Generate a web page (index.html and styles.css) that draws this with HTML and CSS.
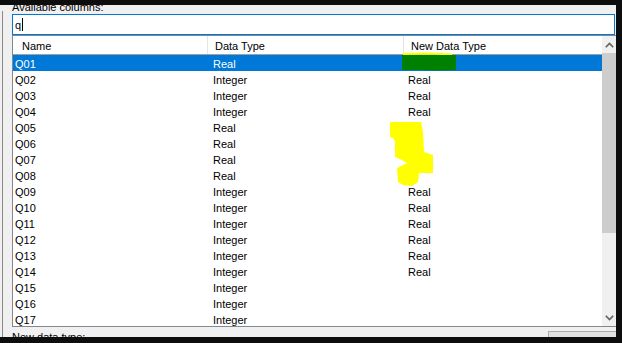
FILE: index.html
```html
<!DOCTYPE html>
<html>
<head>
<meta charset="utf-8">
<link rel="stylesheet" href="styles.css">
</head>
<body>
<div class="window">
  <div class="label-top"><span>Available columns:</span></div>
  <div class="textbox"><span class="typed">q</span><span class="caret"></span></div>
  <div class="listview">
    <div class="table">
      <div class="header">
        <div class="hcell c1">Name</div>
        <div class="hcell c2">Data Type</div>
        <div class="hcell c3">New Data Type</div>
      </div>
      <div class="rows">
        <div class="row selected"><div class="cell c1">Q01</div><div class="cell c2">Real</div><div class="cell c3"></div></div>
        <div class="row"><div class="cell c1">Q02</div><div class="cell c2">Integer</div><div class="cell c3">Real</div></div>
        <div class="row"><div class="cell c1">Q03</div><div class="cell c2">Integer</div><div class="cell c3">Real</div></div>
        <div class="row"><div class="cell c1">Q04</div><div class="cell c2">Integer</div><div class="cell c3">Real</div></div>
        <div class="row"><div class="cell c1">Q05</div><div class="cell c2">Real</div><div class="cell c3"></div></div>
        <div class="row"><div class="cell c1">Q06</div><div class="cell c2">Real</div><div class="cell c3"></div></div>
        <div class="row"><div class="cell c1">Q07</div><div class="cell c2">Real</div><div class="cell c3"></div></div>
        <div class="row"><div class="cell c1">Q08</div><div class="cell c2">Real</div><div class="cell c3"></div></div>
        <div class="row"><div class="cell c1">Q09</div><div class="cell c2">Integer</div><div class="cell c3">Real</div></div>
        <div class="row"><div class="cell c1">Q10</div><div class="cell c2">Integer</div><div class="cell c3">Real</div></div>
        <div class="row"><div class="cell c1">Q11</div><div class="cell c2">Integer</div><div class="cell c3">Real</div></div>
        <div class="row"><div class="cell c1">Q12</div><div class="cell c2">Integer</div><div class="cell c3">Real</div></div>
        <div class="row"><div class="cell c1">Q13</div><div class="cell c2">Integer</div><div class="cell c3">Real</div></div>
        <div class="row"><div class="cell c1">Q14</div><div class="cell c2">Integer</div><div class="cell c3">Real</div></div>
        <div class="row"><div class="cell c1">Q15</div><div class="cell c2">Integer</div><div class="cell c3"></div></div>
        <div class="row"><div class="cell c1">Q16</div><div class="cell c2">Integer</div><div class="cell c3"></div></div>
        <div class="row"><div class="cell c1">Q17</div><div class="cell c2">Integer</div><div class="cell c3"></div></div>
      </div>
    </div>
    <div class="scrollbar">
      <div class="sb-btn">
        <svg width="9" height="6" viewBox="0 0 9 6"><path d="M0.8 5.2 L4.5 1.5 L8.2 5.2" fill="none" stroke="#606060" stroke-width="1.6"/></svg>
      </div>
      <div class="sb-thumb"></div>
      <div class="sb-track"></div>
      <div class="sb-btn">
        <svg width="9" height="6" viewBox="0 0 9 6"><path d="M0.8 0.8 L4.5 4.5 L8.2 0.8" fill="none" stroke="#606060" stroke-width="1.6"/></svg>
      </div>
    </div>
  </div>
  <div class="bottom">
    <span class="label-bottom">New data type:</span>
    <div class="button"></div>
  </div>
</div>
<svg class="annotations" width="622" height="343" viewBox="0 0 622 343">
  <path d="M403 54 L430 53.5 L452 54.5" fill="none" stroke="#ffff00" stroke-width="2"/>
  <path d="M402 55 L456 55 L456 70 L437 70.5 L420 70 L402 70 Z" fill="#008000"/>
  <path d="M390 122 L421 122 L423 132 L424 152 L433 155 L433 173 L419 173 L418 182 L412 186 L403 185 L398 182 L397 168 L407 163 L402 160 L395 157 L395 142 L393 138 L390 137 Z" fill="#ffff00"/>
</svg>
</body>
</html>
```

FILE: styles.css
```css
html, body {
  margin: 0;
  padding: 0;
}
body {
  width: 622px;
  height: 343px;
  background: #0d0d0d;
  overflow: hidden;
  position: relative;
  font-family: "Liberation Sans", Arial, sans-serif;
  font-size: 11px;
  color: #000;
}
.window {
  margin-top: 5px;
  width: 616px;
  height: 332px;
  background: #f0f0f0 linear-gradient(to right, #f0f0f0 2px, #8a8a8a 2px, #8a8a8a 3px, #f0f0f0 3px) no-repeat 0 6px / 3px 100%;
  padding-left: 12px;
  box-sizing: border-box;
  display: flex;
  flex-direction: column;
}
.label-top {
  height: 9px;
  overflow: hidden;
}
.label-top span {
  display: block;
  margin-top: -6px;
  line-height: 16px;
}
.textbox {
  width: 603px;
  height: 21px;
  box-sizing: border-box;
  border: 1px solid #0078d7;
  background: #fff;
  display: flex;
  align-items: center;
  padding-left: 2px;
}
.typed {
  line-height: 14px;
}
.caret {
  width: 1px;
  height: 13px;
  background: #000;
  margin-left: 1px;
}
.listview {
  width: 604px;
  height: 292px;
  box-sizing: border-box;
  border: 1px solid #828790;
  border-right: none;
  background: #fff;
  display: flex;
  overflow: hidden;
}
.table {
  flex: 1;
  display: flex;
  flex-direction: column;
  overflow: hidden;
}
.header, .row {
  display: grid;
  grid-template-columns: 195px 196px 1fr;
}
.header {
  height: 19px;
  box-sizing: border-box;
  border-bottom: 1px solid #a0a0a0;
}
.hcell {
  border-right: 1px solid #e5e5e5;
  padding-left: 8px;
  padding-top: 2px;
  line-height: 16px;
  white-space: nowrap;
}
.hcell.c1 { padding-left: 9px; }
.hcell.c2 { padding-left: 7px; }
.hcell.c3 { border-right: none; padding-left: 7px; }
.row {
  height: 16px;
  box-sizing: border-box;
  padding-top: 2px;
  line-height: 14px;
}
.cell {
  white-space: nowrap;
  overflow: hidden;
}
.cell.c1 { padding-left: 2px; }
.cell.c2 { padding-left: 5px; }
.cell.c3 { padding-left: 4px; }
.row.selected {
  background: #0078d7;
  color: #fff;
}
.scrollbar {
  width: 14px;
  background: #f0f0f0;
  display: flex;
  flex-direction: column;
}
.sb-btn {
  height: 17px;
  display: flex;
  align-items: center;
  justify-content: center;
}
.sb-thumb {
  height: 180px;
  background: #cdcdcd;
}
.sb-track {
  flex: 1;
}
.bottom {
  flex: 1;
  display: flex;
  justify-content: space-between;
  overflow: hidden;
}
.label-bottom {
  line-height: 16px;
  margin-top: 2px;
}
.button {
  width: 68px;
  height: 20px;
  margin-top: 4px;
  box-sizing: border-box;
  border: 1px solid #adadad;
  border-right: none;
  background: #e1e1e1;
}
.annotations {
  position: absolute;
  left: 0;
  top: 0;
  pointer-events: none;
}
```
